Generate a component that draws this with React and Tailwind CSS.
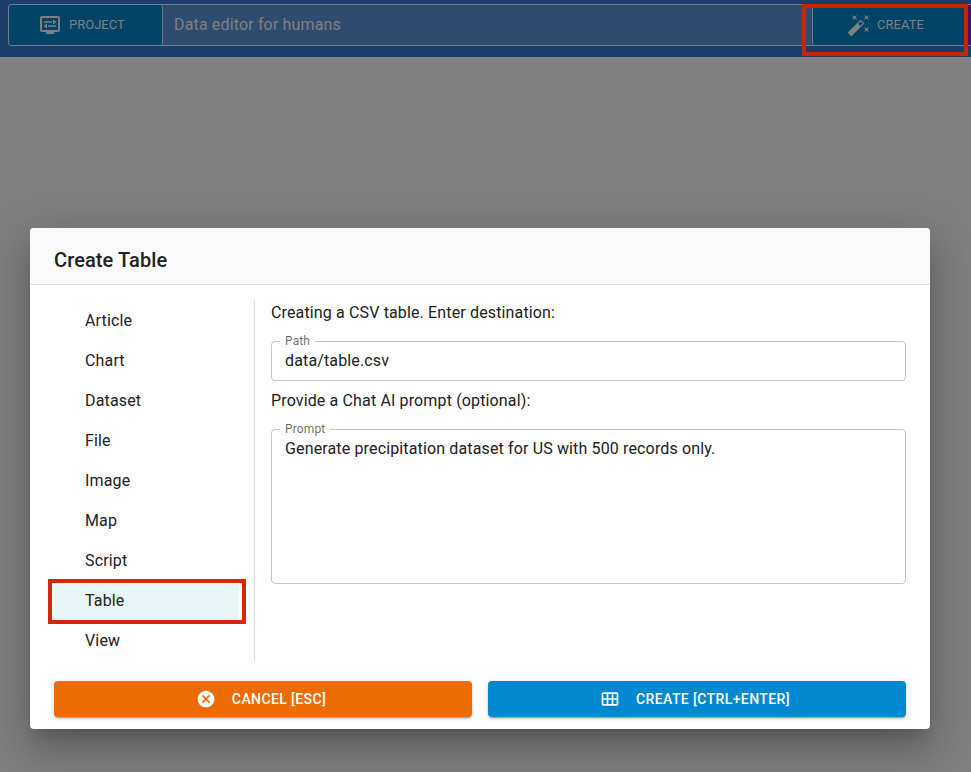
import { MdDisplaySettings, MdAutoFixHigh, MdCancel, MdOutlineCalendarViewMonth } from "react-icons/md";

const items = ["Article", "Chart", "Dataset", "File", "Image", "Map", "Script", "Table", "View"];

function Field({ label, value, className }) {
  return (
    <div className={`relative rounded border border-[#c4c4c4] px-[13px] pt-[7px] ${className}`}>
      <span className="absolute -top-[9px] left-2 bg-white px-[5px] text-[12px] leading-4 tracking-[0.13px] text-black/60">
        {label}
      </span>
      <p className="text-base leading-[23px] tracking-[0.14px]">{value}</p>
    </div>
  );
}

export default function App() {
  return (
    <div className="relative h-[772px] w-[971px] overflow-hidden bg-[#808080] font-[Roboto,sans-serif] text-[#212121]">
      <header className="flex h-[57px] bg-[#1c3d6a] pt-1 pl-2 text-[#808080]">
        <div className="flex h-[42px] w-[963px] rounded-l border border-r-0 border-[#6b7f8c] bg-[#2f4b70]">
          <div className="flex w-[154px] items-center rounded-[3px] border-r border-[#6b7f8c] bg-[#014468] pl-[29px]">
            <MdDisplaySettings size={24} />
            <span className="ml-[7px] text-[13px] tracking-normal">PROJECT</span>
          </div>
          <span className="flex-1 pl-[11px] text-base leading-[39px] tracking-[0.15px]">Data editor for humans</span>
          <div className="flex w-[156px] items-center rounded-l-[3px] border-l border-[#6b7f8c] bg-[#014468] pl-[34px]">
            <MdAutoFixHigh size={24} />
            <span className="ml-[6px] text-[13px] tracking-[0.05px]">CREATE</span>
          </div>
          <div className="w-[3px] bg-[#4a1068]" />
        </div>
      </header>
      <div className="absolute top-1 left-[802px] h-[52px] w-[166px] border-4 border-[#c92502]" />

      <section className="absolute top-[228px] left-[30px] h-[501px] w-[900px] rounded bg-white shadow-[0px_11px_15px_-7px_rgba(0,0,0,0.2),0px_24px_38px_3px_rgba(0,0,0,0.14),0px_9px_46px_8px_rgba(0,0,0,0.12)]">
        <h2 className="h-[57px] rounded-t border-b border-[#dddddd] bg-[#fafafa] px-6 pt-4 text-[20px] leading-8 font-medium tracking-[0.1px]">
          Create Table
        </h2>
        <div className="flex h-[376px] px-6 pt-4">
          <nav className="w-[201px] border-r border-[#dddddd] pr-4">
            {items.map((item) => (
              <div
                key={item}
                className={`relative h-10 pl-[31px] text-base leading-[39px] tracking-[0.15px] ${item === "Table" ? "bg-[#e8f6f8]" : ""}`}
              >
                {item}
                {item === "Table" && (
                  <div className="absolute -top-[2px] -left-[6px] h-[45px] w-[198px] border-4 border-[#d4280a]" />
                )}
              </div>
            ))}
          </nav>
          <div className="ml-4 w-[635px] text-base tracking-[0.14px]">
            <p className="mb-4 leading-6">Creating a CSV table. Enter destination:</p>
            <Field label="Path" value="data/table.csv" className="h-10" />
            <p className="mt-2 mb-4 leading-6">Provide a Chat AI prompt (optional):</p>
            <Field label="Prompt" value="Generate precipitation dataset for US with 500 records only." className="h-[155px]" />
          </div>
        </div>
        <div className="mt-5 flex h-9 gap-4 px-6 text-sm font-medium tracking-[0.4px] text-white">
          <button className="flex w-[418px] items-center justify-center rounded bg-[#ed6c02] pr-1 shadow-[0px_3px_1px_-2px_rgba(0,0,0,0.2),0px_2px_2px_0px_rgba(0,0,0,0.14),0px_1px_5px_0px_rgba(0,0,0,0.12)]">
            <MdCancel size={20} className="mr-4" />
            CANCEL [ESC]
          </button>
          <button className="flex w-[418px] items-center justify-center rounded bg-[#0288d1] pr-1 shadow-[0px_3px_1px_-2px_rgba(0,0,0,0.2),0px_2px_2px_0px_rgba(0,0,0,0.14),0px_1px_5px_0px_rgba(0,0,0,0.12)]">
            <MdOutlineCalendarViewMonth size={20} className="mr-4" />
            CREATE [CTRL+ENTER]
          </button>
        </div>
      </section>
    </div>
  );
}
